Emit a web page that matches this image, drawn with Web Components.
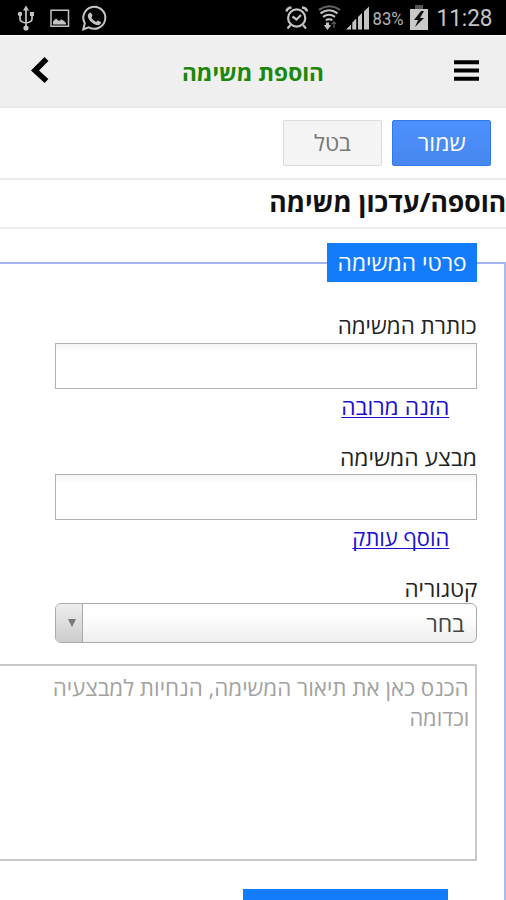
<!DOCTYPE html>
<html lang="he">
<head>
<meta charset="utf-8">
<title>הוספת משימה</title>
<style>
html,body{margin:0;padding:0;height:900px;overflow:hidden;background:#fff}
body{font-family:"Open Sans","Noto Sans",sans-serif;font-size:22px;color:#222}
</style>
</head>
<body>
<task-app></task-app>
<script>
function define(name, html, init) {
  const t = document.createElement('template');
  t.innerHTML = html;
  customElements.define(name, class extends HTMLElement {
    constructor() {
      super();
      this.attachShadow({mode: 'open'}).appendChild(t.content.cloneNode(true));
    }
    connectedCallback() { if (init) init(this, this.shadowRoot); }
  });
}

// One line of text, stretched to the width given in "w".
define('fit-text', `<style>
:host{display:block;flex:none;white-space:nowrap;height:30px;line-height:30px}
span{display:inline-block;transform-origin:100% 50%}
:host([slot=link]) span{text-decoration:underline;text-decoration-thickness:1px;text-underline-offset:2px;text-decoration-skip-ink:none}
</style><span dir="auto"><slot></slot></span>`, (el, root) => {
  const w = +el.getAttribute('w'), s = root.querySelector('span');
  el.style.width = w + 'px';
  el.style.direction = 'rtl';
  const natural = s.getBoundingClientRect().width;
  if (natural) s.style.transform = `scaleX(${w / natural})`;
});

define('status-bar', `<style>
:host{display:flex;direction:ltr;height:35px;background:#000;box-sizing:border-box;color:#bdbdbd}
svg{display:block;width:506px;height:35px;font-family:Roboto,sans-serif}
</style>
<svg viewBox="0 0 506 35" fill="none" stroke="#c4c4c4" stroke-width="1.8">
  <g><path d="M26 10v16M20 15v4q0 3 6 4M32 15v4q0 3-6 4" stroke-width="1.7"/>
  <path d="M26 5.500l3 5h-6z" fill="#c4c4c4" stroke="none"/><circle cx="26" cy="28" r="2.600" fill="#c4c4c4" stroke="none"/><circle cx="20" cy="14" r="2.200" fill="#c4c4c4" stroke="none"/><path d="M30 12h4v4h-4z" fill="#c4c4c4" stroke="none"/></g>
  <path d="M51 10.300h17.500v16H51z" stroke-width="1.500"/>
  <path d="M53 24.500v-3l3-3 3 2.500 2-1.500 2.500 1 2.500 2.500v1.500z" fill="#c4c4c4" stroke="none"/>
  <path d="M83.300 29.300l1.500-6a11 11 0 1 1 4 4z" stroke-width="2"/>
  <path d="M88.300 14.200q1.600-3 3-1l1.300 2.600-1.200 2q1.800 3 4.700 4.200l1.700-1.600 3.100 1.600q.7 1.300-1 2.600-2.500 1.700-6.400-.8-4.500-3-5.600-6.500-.3-1.700.4-3.100z" fill="#c4c4c4" stroke="none"/>
  <g stroke-width="2.200"><circle cx="296.700" cy="18" r="8.600"/><path d="M292.500 16.500l4 3 4.500-4.500M290.500 25l-3 3.500M303 25l3 3.500"/><path d="M286.500 11.500q.5-3.500 5-4M302 7.500q4.500.5 5 4" stroke-width="2.500"/></g>
  <g stroke-width="2.100"><path d="M319 9.800q10.500-7 21 0" stroke="#666"/><path d="M320.500 13.300q8.500-6 17 0M323 16.800q6-4 12 0M325.800 20.200q3.300-2 6.600 0"/></g>
  <path d="M327.500 22.500v3" stroke-width="3"/><path d="M323.800 25h7.400l-3.700 5z" fill="#c4c4c4" stroke="none"/><path d="M334 28v-6m-2 2l2-2 2 2" stroke="#555" stroke-width="1.400"/>
  <g fill="#c4c4c4" stroke="none"><path d="M346 29.500l5-5v5zM352.300 29.500v-7l4-4v11zM358 29.500V17l4-4v16.500zM364 29.500V11.500l5-5v23z"/></g>
  <path d="M415 9V5h8v4z" fill="#555" stroke="none"/>
  <path d="M410 9h18v21h-18z" fill="#c9c9c9" stroke="none"/><path d="M421 11l-7 9h4l-3 7 9-9h-4l4-7z" fill="#111" stroke="none"/>
  <text x="372.500" y="24.800" font-size="18" fill="#b5b5b5" stroke="none" textLength="31" lengthAdjust="spacingAndGlyphs">83%</text>
  <text x="436.500" y="26.300" font-size="24" fill="#c4c4c4" stroke="none" textLength="56" lengthAdjust="spacingAndGlyphs">11:28</text>
</svg>`);

define('app-header', `<style>
:host{display:flex;direction:ltr;align-items:center;justify-content:space-between;box-sizing:border-box;height:73px;border-top:1px solid #fff;border-bottom:2px solid #e8e8e8;background:#efefef;padding:0 26px 0 31px;color:#1b870b;font-size:22px;font-weight:700}
svg{display:block;flex:none}
fit-text{margin-right:-2px;margin-top:1px}
.back{margin-top:-3px}
</style>
<svg class="back" width="20" height="28" viewBox="0 0 20 28"><path d="M15.500 3L4 14.500l11.500 10.500" fill="none" stroke="#000" stroke-width="5.500"/></svg>
<fit-text w="142"><slot></slot></fit-text>
<svg width="27" height="24" viewBox="0 0 27 24"><path d="M1 3.200h25M1 11.500h25M1 19.800h25" stroke="#000" stroke-width="4"/></svg>`);

define('app-button', `<style>
:host{display:flex;box-sizing:border-box;width:99px;height:46px;align-items:center;justify-content:center;border:1px solid #dcdcdc;border-radius:2px;background:#f4f4f4;color:#777;padding-bottom:2px}
:host([primary]){background:linear-gradient(#4d90fe,#4787ed);border-color:#3079ed;color:#fff}
</style><slot></slot>`);

define('tool-bar', `<style>
:host{display:flex;direction:rtl;gap:10px;box-sizing:border-box;height:72px;padding:12px 15px 0 0;border-bottom:2px solid #ececec}
</style><slot></slot>`);

define('page-title', `<style>
:host{display:flex;direction:rtl;align-items:center;box-sizing:border-box;height:49px;padding-bottom:3px;border-bottom:2px solid #ececec;font-size:27px;font-weight:700;color:#111}
</style><slot></slot>`);

define('form-section', `<style>
:host{display:flex;flex-direction:column;direction:rtl;box-sizing:border-box;height:638px;margin-top:33px;border-top:2px solid #a3b3f6;border-right:2px solid #a3bcf6;padding-right:27px}
.legend{display:flex;align-items:center;justify-content:center;box-sizing:border-box;width:150px;height:39px;padding-bottom:2px;margin-top:-21px;margin-bottom:27px;background:#137cfb;color:#fff;flex:none}
</style><div class="legend"><slot name="legend"></slot></div><slot></slot>`);

define('form-field', `<style>
:host{display:flex;flex-direction:column;flex:none;height:var(--h)}
.label{height:34px;box-sizing:border-box;padding-bottom:var(--label-gap,3px);flex:none;display:flex;align-items:center}
.box{box-sizing:border-box;width:422px;height:46px;border:1px solid #b0b0b0;flex:none;background:linear-gradient(#f4f4f4,#fff 8px)}
.link{display:flex;height:34px;align-items:center;padding-right:28px;color:#1a10cf}
</style><div class="label"><slot name="label"></slot></div><div class="box"></div><div class="link"><slot name="link"></slot></div>`);

define('select-box', `<style>
:host{display:flex;justify-content:space-between;align-items:center;box-sizing:border-box;width:422px;height:40px;flex:none;border:1px solid #aaa;border-radius:6px;background:linear-gradient(#fff 30%,#eee);color:#444;overflow:hidden;padding-right:12px}
.arrow{width:27px;height:100%;box-sizing:border-box;border-right:1px solid #aaa;background:linear-gradient(#eee,#ccc);display:flex;align-items:center;justify-content:center}
::slotted(*){margin-top:-1px}
</style><slot></slot><div class="arrow"><svg width="8" height="8" viewBox="0 0 8 8" style="margin-right:-5px"><path d="M0 0h8L4 8z" fill="#777"/></svg></div>`);

define('text-area', `<style>
:host{display:block;box-sizing:border-box;width:477px;height:197px;flex:none;margin-top:21px;border:solid #c8c8c8;border-width:2px 2px 2px 0;padding:6px 6px;color:#a2a2a2}
</style><slot></slot>`);

define('form-action', `<style>
:host{display:block;flex:none;width:205px;height:20px;margin:28px 29px 0 0;background:#137cfb}
</style>`);

define('task-app', `<style>
:host{display:block;width:506px;height:900px;overflow:hidden;background:#fff}
.category{display:flex;align-items:center;box-sizing:border-box;height:29px;padding-bottom:2px;flex:none}
</style>
<status-bar></status-bar>
<app-header>הוספת משימה</app-header>
<tool-bar><app-button primary><fit-text w="48">שמור</fit-text></app-button><app-button><fit-text w="37">בטל</fit-text></app-button></tool-bar>
<page-title><fit-text w="237">הוספה/עדכון משימה</fit-text></page-title>
<form-section>
  <fit-text slot="legend" w="129">פרטי המשימה</fit-text>
  <form-field style="--h:131px"><fit-text slot="label" w="139">כותרת המשימה</fit-text><fit-text slot="link" w="108">הזנה מרובה</fit-text></form-field>
  <form-field style="--h:134px;--label-gap:0px"><fit-text slot="label" w="137">מבצע המשימה</fit-text><fit-text slot="link" w="97">הוסף עותק</fit-text></form-field>
  <div class="category"><fit-text w="73">קטגוריה</fit-text></div>
  <select-box><fit-text w="38">בחר</fit-text></select-box>
  <text-area><fit-text w="416">הכנס כאן את תיאור המשימה, הנחיות למבצעיה</fit-text><fit-text w="60">וכדומה</fit-text></text-area>
  <form-action></form-action>
</form-section>`);
</script>
</body>
</html>
